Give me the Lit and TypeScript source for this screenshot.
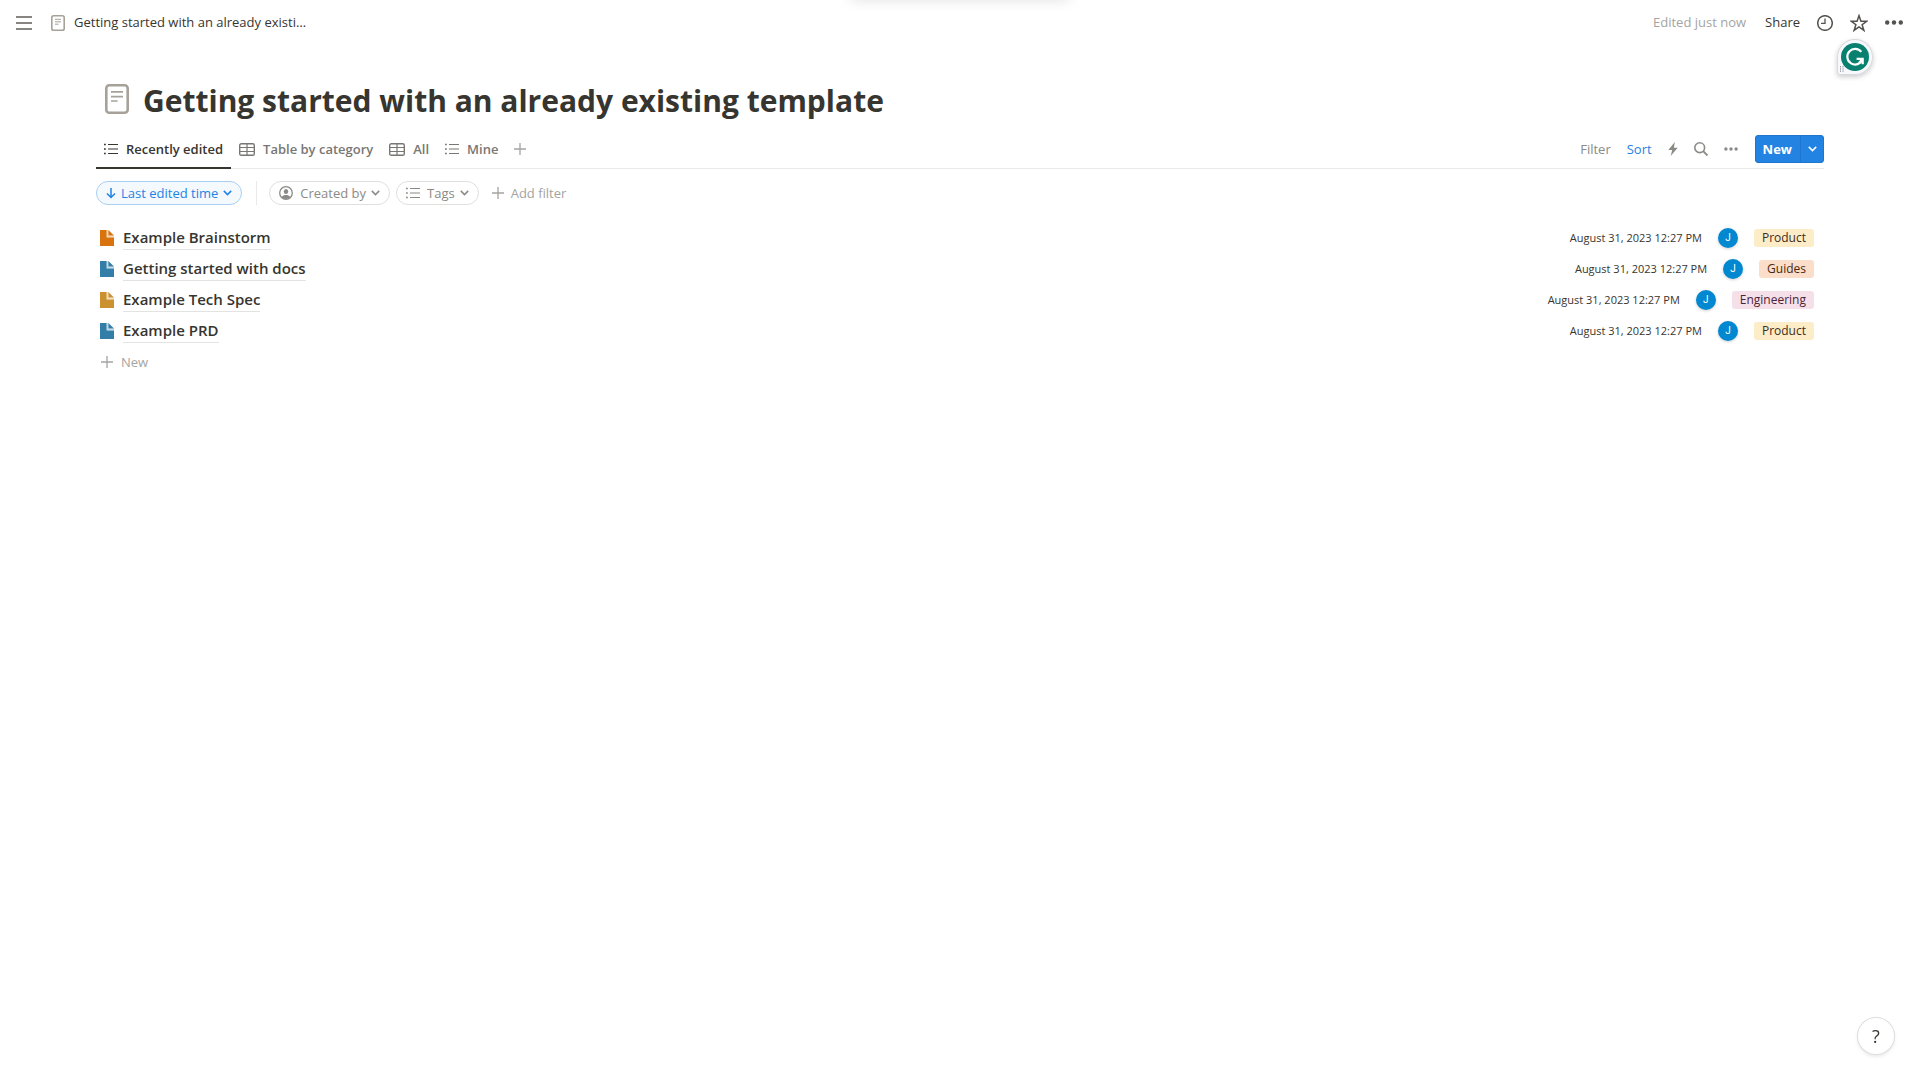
import { LitElement, html, css, svg } from "lit";
import { customElement, property } from "lit/decorators.js";

type Doc = { title: string; color: string; edited: string; author: string; tag: string; tone: string };

const DOCS: Doc[] = [
  { title: "Example Brainstorm", color: "#d9730d", edited: "August 31, 2023 12:27 PM", author: "J", tag: "Product", tone: "yellow" },
  { title: "Getting started with docs", color: "#337ea9", edited: "August 31, 2023 12:27 PM", author: "J", tag: "Guides", tone: "orange" },
  { title: "Example Tech Spec", color: "#cb912f", edited: "August 31, 2023 12:27 PM", author: "J", tag: "Engineering", tone: "pink" },
  { title: "Example PRD", color: "#337ea9", edited: "August 31, 2023 12:27 PM", author: "J", tag: "Product", tone: "yellow" },
];

const VIEWS = [
  { label: "Recently edited", icon: "list", active: true },
  { label: "Table by category", icon: "table", active: false },
  { label: "All", icon: "table", active: false },
  { label: "Mine", icon: "list", active: false },
];

/* name -> [width, height, drawing] */
const ICONS: Record<string, [number, number, unknown]> = {
  menu: [16, 14, svg`<path d="M0 1h16M0 7h16M0 13h16" stroke="currentColor" stroke-width="1.5"/>`],
  page: [14, 16, svg`<rect x=".8" y=".8" width="12.4" height="14.4" rx="1.8" fill="none" stroke="currentColor" stroke-width="1.6"/><path d="M4 4.300h6M4 6.800h6M4 9.200h3.600" stroke="currentColor"/>`],
  pageLarge: [24, 30, svg`<rect x="1.300" y="1.300" width="21.400" height="27.400" rx="3" fill="none" stroke="currentColor" stroke-width="2.600"/><path d="M6 7.800h12M6 12.600h12M6 17h6.600" stroke="currentColor" stroke-width="1.700"/>`],
  clock: [16, 16, svg`<circle cx="8" cy="8" r="7.3" fill="none" stroke="currentColor" stroke-width="1.5"/><path d="M8 3.6V8.3H4" fill="none" stroke="currentColor" stroke-width="1.3"/>`],
  star: [18, 18, svg`<path d="M9 1.6l1.9 5.6h5.9l-4.7 3.5 1.8 5.7L9 12.9l-4.9 3.5 1.8-5.7L1.200 7.200h5.900z" fill="none" stroke="currentColor" stroke-width="1.5" stroke-linejoin="miter"/>`],
  dotsLarge: [18, 5, svg`<circle cx="2.200" cy="2.500" r="2.200" fill="currentColor"/><circle cx="9" cy="2.500" r="2.200" fill="currentColor"/><circle cx="15.800" cy="2.500" r="2.200" fill="currentColor"/>`],
  dots: [14, 4, svg`<circle cx="1.900" cy="2" r="1.700" fill="currentColor"/><circle cx="7" cy="2" r="1.700" fill="currentColor"/><circle cx="12.100" cy="2" r="1.700" fill="currentColor"/>`],
  list: [14, 12, svg`<path d="M0 1.500h1.800M0 6h1.800M0 10.500h1.800" stroke="currentColor" stroke-width="1.700"/><path d="M4 1.500h10M4 6h10M4 10.500h10" stroke="currentColor" stroke-width="1.200"/>`],
  table: [16, 13, svg`<rect x=".7" y=".7" width="14.600" height="11.600" rx="1.600" fill="none" stroke="currentColor" stroke-width="1.400"/><path d="M1 4.500h14M1 8.500h14M8 1v11" stroke="currentColor" stroke-width="1.200"/>`],
  plus: [12, 12, svg`<path d="M6 0v12M0 6h12" stroke="currentColor" stroke-width="1.300"/>`],
  arrow: [10, 12, svg`<path d="M5 1v10M1 6.500l4 4 4-4" fill="none" stroke="currentColor" stroke-width="1.500"/>`],
  chevron: [9, 6, svg`<path d="M.8 .9l3.700 3.700L8.200 .9" fill="none" stroke="currentColor" stroke-width="1.500"/>`],
  person: [14, 14, svg`<circle cx="7" cy="7" r="6.300" fill="none" stroke="currentColor" stroke-width="1.300"/><ellipse cx="7" cy="5.600" rx="2.200" ry="2.500" fill="currentColor"/><path d="M2.700 11.200C3.800 9.200 5.400 8.900 7 8.900s3.200.3 4.300 2.300A6 6 0 0 1 7 13a6 6 0 0 1-4.300-1.800z" fill="currentColor"/>`],
  bolt: [10, 14, svg`<path d="M6.800 0L.3 7.900h3.900L2.700 14l7-8.300H5.900z" fill="currentColor"/>`],
  search: [14, 14, svg`<circle cx="5.700" cy="5.700" r="4.900" fill="none" stroke="currentColor" stroke-width="1.600"/><path d="M9.200 9.200l4.300 4.300" stroke="currentColor" stroke-width="1.900"/>`],
  doc: [14, 16, svg`<path d="M0 0h6.600v7.400H14V16H0z" fill="currentColor"/><path d="M8.400 0L14 5.600H8.400z" fill="currentColor"/><path d="M6.600 0h1.800v5.600H14v1.800H6.600z" fill="currentColor" opacity=".3"/>`],
  assistant: [28, 28, svg`<circle cx="14" cy="14" r="14" fill="#07806f"/><path d="M20.300 8.900A7.800 7.800 0 1 0 21.400 16.600" fill="none" stroke="#fff" stroke-width="2.200"/><path d="M15.600 15.900h6.100v5.300" fill="none" stroke="#fff" stroke-width="2.200"/><path d="M21.300 16.200l-3.400 3.700" stroke="#fff" stroke-width="2"/>`],
  grip: [4, 6, svg`<path d="M.5 0v6M3 0v6" stroke="currentColor" stroke-dasharray="1.500 .7"/>`],
};

@customElement("ui-icon")
class UiIcon extends LitElement {
  @property() name = "";
  static styles = css`
    :host { display: inline-flex; flex: none; }
    .glyph { display: block; }
  `;
  render() {
    const [w, h, body] = ICONS[this.name];
    return html`<svg class="glyph" width=${w} height=${h} viewBox="0 0 ${w} ${h}" aria-hidden="true">${body}</svg>`;
  }
}

@customElement("app-root")
class AppRoot extends LitElement {
  static styles = css`
    :host {
      display: block;
      position: relative;
      min-height: 100vh;
      background: #fff;
      color: #37352f;
      font: 13px/20px "Open Sans", "Noto Sans", sans-serif;
    }
    * { box-sizing: border-box; }
    button {
      display: inline-flex; align-items: center; margin: 0; padding: 0; border: 0;
      background: none; color: inherit; font: inherit; white-space: nowrap; cursor: pointer;
    }
    a { color: inherit; text-decoration: none; }
    .topbar { display: flex; align-items: center; justify-content: space-between; height: 45px; padding: 0 17px 0 16px; }
    .crumbs, .actions { display: flex; align-items: center; }
    .crumbs { gap: 19px; color: #5f5e59; }
    .crumb { display: flex; align-items: center; gap: 9px; color: #37352f; }
    .crumb ui-icon, .heading ui-icon { color: #a6a299; }
    .crumb-text, .edited, .share { padding-bottom: 2px; }
    .crumb-text { max-width: 240px; overflow: hidden; text-overflow: ellipsis; white-space: nowrap; }
    .actions { gap: 17px; color: #55534e; }
    .edited { margin-right: 2px; color: #a5a4a1; }
    .share { color: #37352f; }
    main { padding: 33px 96px 0; }
    .heading { display: flex; align-items: center; gap: 14px; height: 46px; padding-left: 9px; }
    .heading ui-icon { margin-bottom: 4px; }
    h1 { margin: 0; font-size: 30px; line-height: 46px; font-weight: 700; white-space: nowrap; }
    .viewbar { display: flex; justify-content: space-between; height: 45px; border-bottom: 1px solid #e9e9e7; }
    .views { display: flex; height: 45px; padding-top: 7px; color: #787774; }
    .view { gap: 8px; padding: 0 8px; height: 38px; font-weight: 600; border-bottom: 2px solid transparent; }
    .view.active { color: #37352f; border-color: #37352f; }
    .add { padding: 0 8px; height: 36px; color: #a5a4a1; }
    .tools { display: flex; align-items: center; gap: 16px; height: 36px; margin-top: 7px; color: #8b8a86; }
    .sort { color: #2383e2; }
    .new { display: flex; height: 28px; margin-left: 1px; border-radius: 4px; background: #2383e2; box-shadow: inset 0 0 0 1px #1f76cb; color: #fff; }
    .new-main { padding: 0 8px; font-weight: 700; border-right: 1px solid #1f76cb; }
    .new-more { padding: 0 7px; }
    .filters { display: flex; align-items: center; height: 24px; margin-top: 12px; gap: 6px; color: #8b8a86; }
    .pill { height: 24px; gap: 5px; padding: 0 9px; border: 1px solid #dfdfdd; border-radius: 12px; }
    .pill.sorted { color: #2383e2; background: #f4f9fe; border-color: #a9cff4; }
    .kind { gap: 7px; display: flex; align-items: center; }
    .rule { width: 1px; height: 24px; margin: 0 6px 0 8px; background: #e9e9e7; }
    .add-filter { gap: 7px; padding: 0 7px; color: #a5a4a1; }
    .docs { list-style: none; margin: 17px 0 0; padding: 0; }
    .doc { display: flex; align-items: center; justify-content: space-between; height: 31px; padding: 0 10px 0 4px; }
    .name { display: flex; align-items: center; gap: 9px; }
    .title { font-size: 15px; line-height: 24px; font-weight: 600; border-bottom: 1px solid #e3e3e1; }
    .meta { display: flex; align-items: center; gap: 16px; font-size: 11px; }
    .avatar {
      display: grid; place-items: center; width: 20px; height: 20px; border-radius: 50%;
      background: #0288d1; color: #fff; font: 10px/20px Roboto, sans-serif; box-shadow: 0 1px 3px rgba(15, 15, 15, .2);
    }
    .tag { padding: 0 8px; border-radius: 3px; font-size: 12px; line-height: 18px; }
    .yellow { background: #fdecc8; color: #402c1b; }
    .orange { background: #fadec9; color: #49290e; }
    .pink { background: #f5e0e9; color: #4c2337; }
    .add-doc { gap: 8px; height: 31px; padding: 0 5px; color: #a5a4a1; }
    .notice {
      position: absolute; top: -20px; left: 50%; width: 220px; height: 20px; margin-left: -110px;
      border-radius: 4px; box-shadow: 0 0 14px rgba(15, 15, 15, .12);
    }
    .assistant {
      position: absolute; top: 39px; right: 47px; width: 36px; height: 36px; justify-content: center;
      border-radius: 18px 18px 18px 3px; background: #f8f9fd; box-shadow: inset 0 0 0 1px #d9dade, 0 2px 5px rgba(0, 0, 0, .2);
    }
    .grip { position: absolute; left: 3px; bottom: 3px; color: #9a9ba3; }
    .help {
      position: fixed; right: 26px; bottom: 26px; width: 36px; height: 36px; justify-content: center;
      border-radius: 50%; background: #fff; font-size: 18px; box-shadow: 0 0 0 1px #dededd, 0 2px 4px rgba(15, 15, 15, .12);
    }
  `;

  render() {
    return html`
      <header class="topbar">
        <nav class="crumbs">
          <button aria-label="Open sidebar"><ui-icon name="menu"></ui-icon></button>
          <a class="crumb" href="#"><ui-icon name="page"></ui-icon><span class="crumb-text">Getting started with an already existi…</span></a>
        </nav>
        <div class="actions">
          <span class="edited">Edited just now</span>
          <button class="share">Share</button>
          <button aria-label="Updates"><ui-icon name="clock"></ui-icon></button>
          <button aria-label="Favorite"><ui-icon name="star"></ui-icon></button>
          <button aria-label="More"><ui-icon name="dotsLarge"></ui-icon></button>
        </div>
      </header>
      <main>
        <div class="heading">
          <ui-icon name="pageLarge"></ui-icon>
          <h1>Getting started with an already existing template</h1>
        </div>
        <div class="viewbar">
          <div class="views">
            ${VIEWS.map((v) => html`<button class="view ${v.active ? "active" : ""}"><ui-icon name=${v.icon}></ui-icon>${v.label}</button>`)}
            <button class="add" aria-label="Add view"><ui-icon name="plus"></ui-icon></button>
          </div>
          <div class="tools">
            <button>Filter</button>
            <button class="sort">Sort</button>
            <button aria-label="Automations"><ui-icon name="bolt"></ui-icon></button>
            <button aria-label="Search"><ui-icon name="search"></ui-icon></button>
            <button aria-label="View options"><ui-icon name="dots"></ui-icon></button>
            <div class="new">
              <button class="new-main">New</button>
              <button class="new-more" aria-label="Templates"><ui-icon name="chevron"></ui-icon></button>
            </div>
          </div>
        </div>
        <div class="filters">
          <button class="pill sorted"><ui-icon name="arrow"></ui-icon>Last edited time<ui-icon name="chevron"></ui-icon></button>
          <span class="rule"></span>
          <button class="pill"><span class="kind"><ui-icon name="person"></ui-icon>Created by</span><ui-icon name="chevron"></ui-icon></button>
          <button class="pill"><span class="kind"><ui-icon name="list"></ui-icon>Tags</span><ui-icon name="chevron"></ui-icon></button>
          <button class="add-filter"><ui-icon name="plus"></ui-icon>Add filter</button>
        </div>
        <ul class="docs">
          ${DOCS.map((d) => html`
            <li class="doc">
              <a class="name" href="#"><ui-icon name="doc" style="color:${d.color}"></ui-icon><span class="title">${d.title}</span></a>
              <div class="meta">
                <span>${d.edited}</span>
                <span class="avatar">${d.author}</span>
                <span class="tag ${d.tone}">${d.tag}</span>
              </div>
            </li>`)}
        </ul>
        <button class="add-doc"><ui-icon name="plus"></ui-icon>New</button>
      </main>
      <div class="notice"></div>
      <button class="assistant" aria-label="Writing assistant">
        <ui-icon name="assistant"></ui-icon><ui-icon class="grip" name="grip"></ui-icon>
      </button>
      <button class="help" aria-label="Help">?</button>
    `;
  }
}
